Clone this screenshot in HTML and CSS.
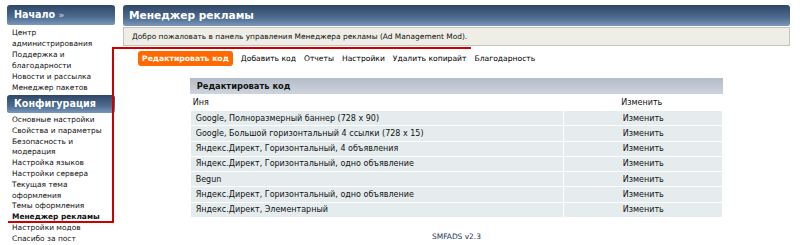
FILE: index.html
```html
<!DOCTYPE html>
<html lang="ru">
<head>
    <meta charset="UTF-8">
    <title>Менеджер рекламы</title>
    <link rel="stylesheet" href="styles.css">
</head>
<body>
    <div class="page">
        <div class="sidebar">
            <div class="side-title">Начало <span class="arrows">&#187;</span></div>
            <ul class="side-list">
                <li>Центр администрирования</li>
                <li>Поддержка и благодарности</li>
                <li>Новости и рассылка</li>
                <li>Менеджер пакетов</li>
            </ul>
            <div class="side-title">Конфигурация</div>
            <ul class="side-list">
                <li>Основные настройки</li>
                <li>Свойства и параметры</li>
                <li>Безопасность и модерация</li>
                <li>Настройка языков</li>
                <li>Настройки сервера</li>
                <li>Текущая тема оформления</li>
                <li>Темы оформления</li>
                <li class="current">Менеджер рекламы</li>
                <li>Настройки модов</li>
                <li>Спасибо за пост</li>
            </ul>
        </div>

        <div class="main">
            <div class="cat-bar">Менеджер рекламы</div>
            <div class="welcome">Добро пожаловать в панель управления Менеджера рекламы (Ad Management Mod).</div>

            <div class="tabs">
                <span class="tab active">Редактировать код</span>
                <span class="tab">Добавить код</span>
                <span class="tab">Отчеты</span>
                <span class="tab">Настройки</span>
                <span class="tab">Удалить копирайт</span>
                <span class="tab">Благодарность</span>
            </div>

            <div class="ads">
                <div class="ads-title">Редактировать код</div>
                <table class="ads-table">
                    <tr class="head">
                        <td>Иня</td>
                        <td class="act">Изменить</td>
                    </tr>
                    <tr><td>Google, Полноразмерный баннер (728 x 90)</td><td class="act">Изменить</td></tr>
                    <tr><td>Google, Большой горизонтальный 4 ссылки (728 x 15)</td><td class="act">Изменить</td></tr>
                    <tr><td>Яндекс.Директ, Горизонтальный, 4 объявления</td><td class="act">Изменить</td></tr>
                    <tr><td>Яндекс.Директ, Горизонтальный, одно объявление</td><td class="act">Изменить</td></tr>
                    <tr><td>Begun</td><td class="act">Изменить</td></tr>
                    <tr><td>Яндекс.Директ, Горизонтальный, одно объявление</td><td class="act">Изменить</td></tr>
                    <tr><td>Яндекс.Директ, Элементарный</td><td class="act">Изменить</td></tr>
                </table>
            </div>

            <div class="footer">SMFADS v2.3</div>
        </div>
    </div>

    <!-- красная пометка поверх страницы -->
    <svg class="mark" width="800" height="245" viewBox="0 0 800 245">
        <polyline points="471,48 113,48 113,222 8,222" fill="none" stroke="#cc0000" stroke-width="2"/>
    </svg>
</body>
</html>
```

FILE: styles.css
```css
body {
    margin: 0;
    font-family: "DejaVu Sans", Verdana, sans-serif;
    font-size: 7.45px;
    color: #111;
    background-color: #ffffff;
}
.page {
    display: flex;
    gap: 8px;
    padding: 5px 10px 0 7px;
}
.sidebar {
    width: 108px;
    flex-shrink: 0;
}
.side-title {
    height: 20px;
    line-height: 20px;
    padding-left: 7px;
    color: #ffffff;
    font-size: 9.6px;
    font-weight: bold;
    border-radius: 3px 3px 2px 2px;
    background: linear-gradient(#2f4766, #4d6a8f 60%, #7a98bb);
}
.side-title + .side-list + .side-title {
    margin-top: 2px;
    height: 18px;
    line-height: 18px;
}
.arrows {
    color: #b8c2d0;
    font-size: 9px;
}
.side-list {
    list-style: none;
    margin: 2px 0 0;
    padding: 0 0 0 5px;
    line-height: 11px;
}
.side-list:last-child {
    line-height: 10.8px;
}
.side-list .current {
    font-weight: bold;
}
.main {
    flex: 1;
}
.cat-bar {
    height: 21px;
    line-height: 21px;
    padding-left: 6px;
    color: #ffffff;
    font-size: 10.6px;
    font-weight: bold;
    border-radius: 3px 3px 2px 2px;
    background: linear-gradient(#2f4766, #4d6a8f 60%, #7a98bb);
}
.welcome {
    margin-top: 1px;
    height: 17px;
    line-height: 17px;
    padding-left: 8px;
    background-color: #efeee6;
    border: 1px solid #c4c4bc;
}
.tabs {
    display: flex;
    align-items: center;
    gap: 8px;
    margin: 5px 0 0 15px;
    height: 15px;
    font-size: 7.6px;
}
.tab {
    color: #000;
}
.tab.active {
    background-color: #ff6a00;
    color: #ffffff;
    font-size: 7.7px;
    font-weight: bold;
    padding: 0 4px;
    line-height: 15px;
    border-radius: 3px;
}
.ads {
    width: 80%;
    margin: 12px auto 0;
    font-size: 8px;
}
.ads-title {
    height: 16px;
    line-height: 16px;
    padding-left: 7px;
    font-size: 8.3px;
    font-weight: bold;
    background: linear-gradient(#b4bcc8, #cdd4dd);
}
.ads-table {
    width: 100%;
    border-collapse: separate;
    border-spacing: 1px;
    margin-top: -1px;
}
.ads-table td {
    height: 14.25px;
    padding: 0 5px;
    background-color: #e4ecee;
}
.ads-table .head td {
    height: 16px;
    background-color: #ffffff;
    padding-left: 2px;
}
.ads-table .act {
    width: 148px;
    text-align: center;
}
.footer {
    margin-top: 14px;
    text-align: center;
    color: #223355;
}
.mark {
    position: absolute;
    top: 0;
    left: 0;
    pointer-events: none;
}
```
